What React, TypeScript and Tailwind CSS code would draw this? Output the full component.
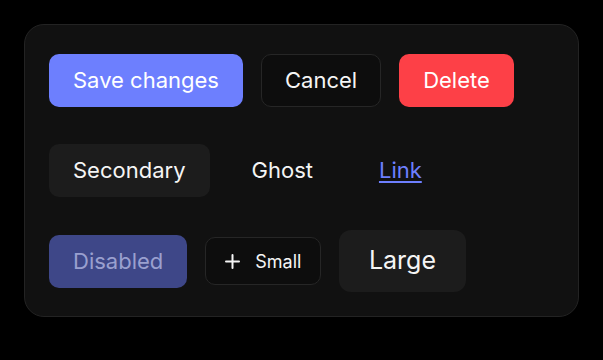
export default function App() {
  return (
    <div
      className="min-h-[360px] w-[603px] bg-black p-6 text-[#f5f5f5]"
      style={{ fontFamily: "Inter, 'Noto Sans', sans-serif" }}
    >
      <div className="flex w-[555px] flex-col gap-[28.5px] rounded-[20px] border border-[#232323] bg-[#111111] p-6">
        {/* row 1 */}
        <div className="flex h-[62px] items-center gap-[18px]">
          <button className="h-[53px] rounded-[10px] bg-[#6d7ffe] px-6 text-[22px] text-white">
            Save changes
          </button>
          <button className="h-[53px] rounded-[10px] border border-[#262626] bg-[#0d0d0d] px-[23px] text-[22px]">
            Cancel
          </button>
          <button className="h-[53px] rounded-[10px] bg-[#fd4047] px-6 text-[22px] text-white">
            Delete
          </button>
        </div>

        {/* row 2 */}
        <div className="flex h-[62px] items-center gap-[18px]">
          <button className="h-[53px] rounded-[10px] bg-[#1c1c1c] px-6 text-[22px]">
            Secondary
          </button>
          <button className="h-[53px] rounded-[10px] px-6 text-[22px]">
            Ghost
          </button>
          <button className="h-[53px] rounded-[10px] px-6 text-[22px] text-[#6d7ffe] underline decoration-2 underline-offset-[3px]">
            Link
          </button>
        </div>

        {/* row 3 */}
        <div className="flex h-[62px] items-center gap-[18px]">
          <button
            disabled
            className="h-[53px] rounded-[10px] bg-[#3e4788] px-6 text-[22px] text-[#9aa0cf]"
          >
            Disabled
          </button>
          <button className="flex h-[48px] items-center gap-[15px] rounded-[10px] border border-[#262626] bg-[#0d0d0d] px-[19px] text-[18px]">
            <svg width="15" height="15" viewBox="0 0 15 15" fill="none" stroke="currentColor" strokeWidth="2" strokeLinecap="round">
              <path d="M7.5 1v13M1 7.5h13" />
            </svg>
            Small
          </button>
          <button className="h-[62px] rounded-[12px] bg-[#1c1c1c] px-[29.5px] text-[25px]">
            Large
          </button>
        </div>
      </div>
    </div>
  );
}
